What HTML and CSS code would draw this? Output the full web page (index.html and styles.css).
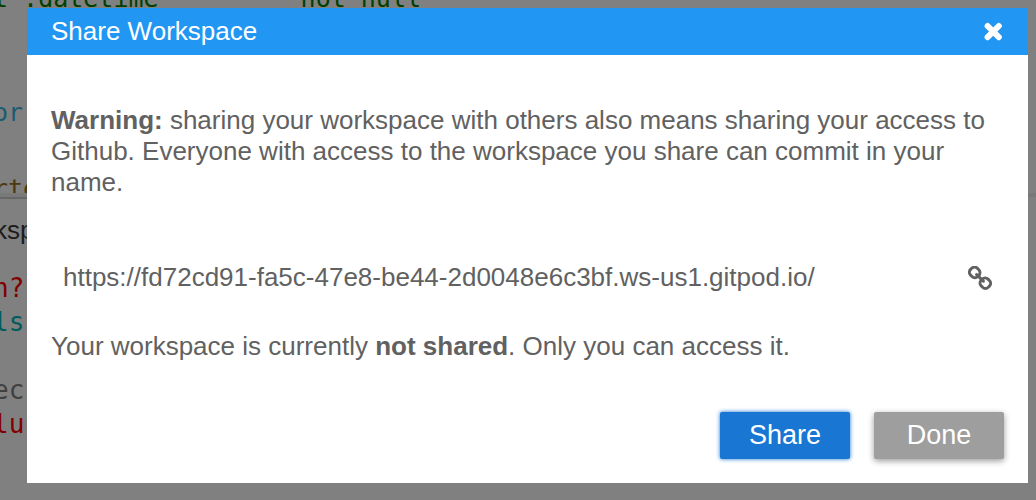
FILE: index.html
```html
<!DOCTYPE html>
<html lang="en">
<head>
<meta charset="utf-8">
<title>Share Workspace</title>
<link rel="stylesheet" href="styles.css">
</head>
<body>
<div class="workbench" aria-hidden="true">
  <div class="editor">
    <div class="code-line green"><span>t :datetime</span><span class="column">not null</span></div>
    <div class="code-line"></div>
    <div class="code-line"></div>
    <div class="code-line blue">or</div>
    <div class="code-line"></div>
    <div class="code-line brown">rte</div>
  </div>
  <div class="panel">
    <div class="tab">ksp</div>
    <div class="output-line red">n?</div>
    <div class="output-line teal">ls</div>
    <div class="output-line"></div>
    <div class="output-line gray">ec</div>
    <div class="output-line red">lu</div>
  </div>
</div>
<div class="overlay">
  <section class="dialog" role="dialog" aria-modal="true" aria-labelledby="dialog-title">
    <header class="dialog-header">
      <h1 class="dialog-title" id="dialog-title">Share Workspace</h1>
      <button class="icon-button" type="button" aria-label="Close">
        <svg width="20" height="20" viewBox="0 0 20 20"><path d="M3.600 4L14.800 15.200M14.800 4L3.600 15.200" fill="none" stroke="currentColor" stroke-width="6" stroke-linecap="round"/></svg>
      </button>
    </header>
    <div class="dialog-body">
      <p class="message"><strong>Warning:</strong> sharing your workspace with others also means sharing your access to Github. Everyone with access to the workspace you share can commit in your name.</p>
      <div class="link-row">
        <input class="url" type="text" readonly aria-label="Workspace URL" value="https://fd72cd91-fa5c-47e8-be44-2d0048e6c3bf.ws-us1.gitpod.io/">
        <button class="icon-button" type="button" aria-label="Copy link">
          <svg width="24" height="24" viewBox="0 0 24 24" fill="none" stroke="currentColor" stroke-width="3" stroke-linecap="round">
            <rect x="1.700" y="1.600" width="10" height="9.600" rx="4" transform="rotate(45 6.700 6.400)"/>
            <rect x="12.300" y="12.400" width="10" height="9.600" rx="4" transform="rotate(45 17.300 17.200)"/>
            <path d="M8.600 8.600L15.400 15.200"/>
          </svg>
        </button>
      </div>
      <p class="message">Your workspace is currently <strong>not shared</strong>. Only you can access it.</p>
      <div class="actions">
        <button class="button primary" type="button">Share</button>
        <button class="button secondary" type="button">Done</button>
      </div>
    </div>
  </section>
</div>
</body>
</html>
```
FILE: styles.css
```css
* {
  box-sizing: border-box;
}

body {
  margin: 0;
  min-height: 100vh;
  background: #808080;
  color: #616161;
  font: 26px/31px "Liberation Sans", Arial, sans-serif;
  overflow: hidden;
}

.workbench {
  position: absolute;
  inset: 0;
  display: flex;
  flex-direction: column;
  overflow: hidden;
  font: 25px/38px "DejaVu Sans Mono", monospace;
}

.editor {
  display: flex;
  flex: 0 0 193px;
  flex-direction: column;
  justify-content: flex-end;
  overflow: hidden;
}

.code-line,
.output-line {
  flex: none;
  height: 38px;
  margin-left: -7px;
  white-space: pre;
}

.editor .code-line:last-child {
  margin-bottom: -15px;
}

.column {
  margin-left: 142px;
}

.panel {
  flex: 1;
  padding-top: 18px;
  border-top: 4px solid #797979;
  background: linear-gradient(#666, #666) 0 0 / 40px 2px no-repeat;
}

.tab {
  height: 31px;
  margin: 0 0 25px -6px;
  color: #1c1c1c;
  font: 26px/31px "Liberation Sans", Arial, sans-serif;
}

.output-line {
  height: 34px;
  font-size: 26px;
  line-height: 34px;
}

.green { color: #004000; }
.blue { color: #1b5c70; }
.brown { color: #4d3810; }
.red { color: #800000; }
.teal { color: #005c5c; }
.gray { color: #404040; }

.overlay {
  position: relative;
  padding: 8px 8px 17px 27px;
}

.dialog {
  background: #fff;
}

.dialog-header {
  display: flex;
  align-items: center;
  justify-content: space-between;
  padding: 8px 24px;
  background: #2196f3;
  color: #fff;
}

.dialog-title {
  margin: 0;
  font-size: 26px;
  font-weight: 400;
  line-height: 31px;
}

.icon-button {
  display: flex;
  padding: 0;
  border: 0;
  background: none;
  color: inherit;
  cursor: pointer;
}

.dialog-body {
  padding: 50px 24px 24px;
}

.message {
  margin: 0;
}

.link-row {
  display: flex;
  align-items: center;
  gap: 12px;
  padding: 12px;
  margin: 52px 0 26px;
}

.url {
  flex: 1;
  min-width: 0;
  height: 31px;
  padding: 0;
  border: 0;
  background: none;
  color: inherit;
  font: inherit;
}

.actions {
  display: flex;
  justify-content: flex-end;
  gap: 24px;
  margin-top: 50px;
}

.button {
  width: 130px;
  padding: 8px;
  border: 0;
  border-radius: 2px;
  color: #fff;
  font: inherit;
  font-size: 27px;
  cursor: pointer;
}

.primary {
  background: #1976d2;
  box-shadow: 0 0 4px #1976d2;
}

.secondary {
  background: #9e9e9e;
  box-shadow: 0 2px 6px rgba(0, 0, 0, 0.4);
}
```
